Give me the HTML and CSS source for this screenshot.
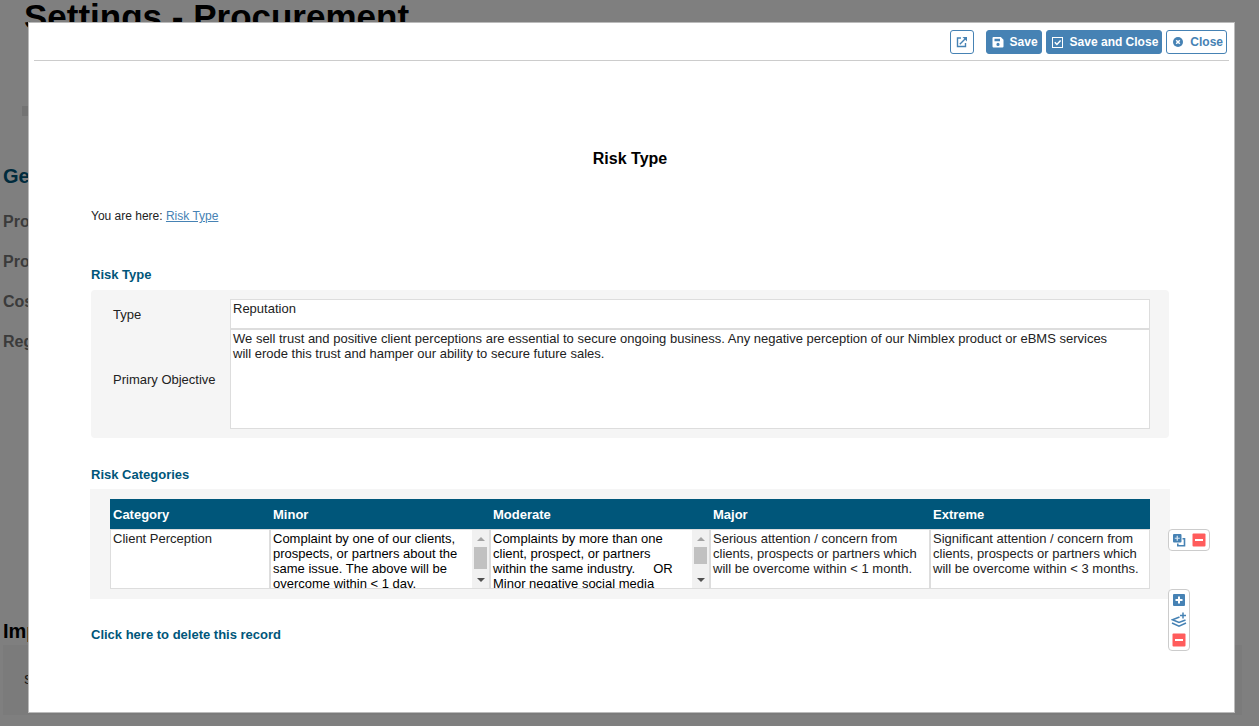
FILE: index.html
```html
<!DOCTYPE html>
<html lang="en">
  <head>
    <meta charset="UTF-8" />
    <meta name="viewport" content="width=device-width, initial-scale=1.0" />
    <title>Risk Type</title>
    <link rel="stylesheet" href="styles.css">
  </head>
  <body>
    <div class="settings">
      <h1>Settings - Procurement</h1>
      <div class="tab-strip"></div>
      <h2 class="settings-group">Ge</h2>
      <ul class="settings-menu">
        <li>Pro</li>
        <li>Pro</li>
        <li>Cos</li>
        <li>Reg</li>
      </ul>
      <h2 class="settings-import">Imp</h2>
      <div class="settings-panel">S</div>
    </div>

    <div class="overlay">
      <div class="dialog" role="dialog" aria-labelledby="dialog-title">
        <div class="toolbar">
          <button type="button" class="btn btn-icon" aria-label="Open in new window">
            <svg width="12" height="12" viewBox="0 0 12 12" fill="none" stroke="currentColor" stroke-width="1.4">
              <path d="M5 2H1.5v8.500H9.500V7M3.800 8.200L9.500 2.500" />
              <path d="M6.500 1H11v4.500z" fill="currentColor" stroke="none" />
            </svg>
          </button>
          <button type="button" class="btn btn-primary">
            <svg width="12" height="12" viewBox="0 0 12 12" fill="currentColor" fill-rule="evenodd">
              <path d="M1.500 1H8.800L11.500 3.700V10.500a1 1 0 0 1-1 1H1.500a1 1 0 0 1-1-1V2a1 1 0 0 1 1-1zM2.500 2.800V5.200H8V2.800zM6 6.800a1.600 1.600 0 1 0 0 3.200a1.600 1.600 0 0 0 0-3.200z" />
            </svg>
            Save
          </button>
          <button type="button" class="btn btn-primary">
            <svg width="12" height="12" viewBox="0 0 12 12" fill="none" stroke="currentColor">
              <rect x="0.500" y="1.500" width="10" height="10" />
              <path d="M2.800 6.300L4.900 8.500L8.600 4.400" stroke-width="1.500" />
            </svg>
            Save and Close
          </button>
          <button type="button" class="btn">
            <svg width="12" height="12" viewBox="0 0 12 12">
              <circle cx="6" cy="6" r="5" fill="currentColor" />
              <path d="M4.200 4.200l3.600 3.600M7.800 4.200l-3.600 3.600" stroke="#fff" stroke-width="1.500" />
            </svg>
            Close
          </button>
        </div>

        <div class="content">
          <h2 class="title" id="dialog-title">Risk Type</h2>
          <p class="breadcrumb">You are here: <a href="#">Risk Type</a></p>

          <h3>Risk Type</h3>
          <div class="panel form">
            <label for="type">Type</label>
            <textarea id="type" class="field">Reputation</textarea>
            <label for="objective">Primary Objective</label>
            <textarea id="objective" class="field field-tall">We sell trust and positive client perceptions are essential to secure ongoing business. Any negative perception of our Nimblex product or eBMS services will erode this trust and hamper our ability to secure future sales.</textarea>
          </div>

          <h3>Risk Categories</h3>
          <div class="panel categories">
            <table>
              <thead>
                <tr>
                  <th class="col-category" id="category">Category</th>
                  <th id="minor">Minor</th>
                  <th id="moderate">Moderate</th>
                  <th id="major">Major</th>
                  <th id="extreme">Extreme</th>
                </tr>
              </thead>
              <tbody>
                <tr>
                  <td><textarea class="field" aria-labelledby="category">Client Perception</textarea></td>
                  <td>
                    <div class="scroll-field">
                      <textarea class="field" aria-labelledby="minor">Complaint by one of our clients, prospects, or partners about the same issue. The above will be overcome within &lt; 1 day.</textarea>
                      <div class="scrollbar">
                        <span class="arrow-up"></span>
                        <span class="thumb thumb-long"></span>
                        <span class="arrow-down"></span>
                      </div>
                    </div>
                  </td>
                  <td>
                    <div class="scroll-field">
                      <textarea class="field" aria-labelledby="moderate">Complaints by more than one client, prospect, or partners within the same industry.     OR Minor negative social media</textarea>
                      <div class="scrollbar">
                        <span class="arrow-up"></span>
                        <span class="thumb"></span>
                        <span class="arrow-down"></span>
                      </div>
                    </div>
                  </td>
                  <td><textarea class="field" aria-labelledby="major">Serious attention / concern from clients, prospects or partners which will be overcome within &lt; 1 month.</textarea></td>
                  <td><textarea class="field" aria-labelledby="extreme">Significant attention / concern from clients, prospects or partners which will be overcome within &lt; 3 months.</textarea></td>
                </tr>
              </tbody>
            </table>

            <div class="actions row-actions">
              <button type="button" aria-label="Duplicate row">
                <svg width="14" height="14" viewBox="0 0 14 14">
                  <path d="M10.500 5.800h2v7H5.800v-2.300" fill="none" stroke="#4682b4" stroke-width="1.600" />
                  <rect x="1" y="1" width="8.500" height="8.500" rx="1" fill="#4682b4" />
                  <path d="M5.250 2.800v5M2.800 5.250h5" stroke="#dbe8f3" stroke-width="1.200" />
                </svg>
              </button>
              <button type="button" aria-label="Delete row">
                <svg width="14" height="14" viewBox="0 0 14 14">
                  <rect x="0.500" y="0.500" width="13" height="13" rx="1" fill="#ff5c5c" />
                  <path d="M3 7h8" stroke="#fff" stroke-width="2" />
                </svg>
              </button>
            </div>

            <div class="actions table-actions">
              <button type="button" aria-label="Add row">
                <svg width="14" height="14" viewBox="0 0 14 14">
                  <rect x="1" y="1" width="12" height="12" rx="1" fill="#4682b4" />
                  <path d="M7 3.500v7M3.500 7h7" stroke="#fff" stroke-width="2" />
                </svg>
              </button>
              <button type="button" aria-label="Add multiple rows">
                <svg width="16" height="16" viewBox="0 0 16 16" fill="none" stroke="#4682b4" stroke-width="1.500">
                  <path d="M8.500 5L1.500 7.800L8 10.500L14.500 8M1 11L8 14.200L15 11" />
                  <path d="M12 0.500v6M9 3.500h6" />
                </svg>
              </button>
              <button type="button" aria-label="Delete rows">
                <svg width="14" height="14" viewBox="0 0 14 14">
                  <rect x="0.500" y="0.500" width="13" height="13" rx="1" fill="#ff5c5c" />
                  <path d="M3 7h8" stroke="#fff" stroke-width="2" />
                </svg>
              </button>
            </div>
          </div>

          <a class="delete" href="#">Click here to delete this record</a>
        </div>
      </div>
    </div>
  </body>
</html>
```
FILE: styles.css
```css
* {
  box-sizing: border-box;
}
body {
  margin: 0;
  height: 100vh;
  overflow: hidden;
  font-family: "Liberation Sans", Arial, sans-serif;
  font-size: 13px;
  color: #222;
}
h1, h2, h3, p, ul {
  margin: 0;
  padding: 0;
}

/* page behind the dialog */
.settings {
  padding: 0 17px 0 3px;
}
.settings h1 {
  padding-left: 21px;
  font-size: 35px;
  line-height: 34px;
  color: #000;
}
.tab-strip {
  height: 10px;
  margin: 72px 19px 50px;
  background: #e6e6e6;
}
.settings-group {
  font-size: 20px;
  line-height: 20px;
  color: #00567a;
}
.settings-menu {
  margin-top: 16px;
  list-style: none;
  font-size: 16px;
  font-weight: bold;
  line-height: 40px;
  color: #777;
}
.settings-import {
  margin: 259px 0 4px;
  font-size: 20px;
  line-height: 20px;
  color: #000;
}
.settings-panel {
  padding: 28px 21px;
  line-height: 14px;
  background: #f6f6f6;
}

.overlay {
  position: fixed;
  inset: 0;
  padding: 22px 24px 13px 28px;
  overflow: auto;
  background: rgba(0, 0, 0, 0.5);
}
.dialog {
  border: 1px solid #bbb;
  background: #fff;
}

.toolbar {
  display: flex;
  justify-content: flex-end;
  gap: 4px;
  margin: 0 5px;
  padding: 7px 2px 6px;
  border-bottom: 1px solid #ccc;
}
.btn {
  display: flex;
  align-items: center;
  gap: 6px;
  height: 24px;
  padding: 0 3px 0 5px;
  border: 1px solid #4682b4;
  border-radius: 3px;
  background: #fff;
  color: #4682b4;
  font-family: inherit;
  font-size: 12px;
  font-weight: bold;
}
.btn-primary {
  background: #4682b4;
  color: #fff;
}
.btn-icon {
  margin-right: 8px;
  padding: 0 5px;
}

.content {
  padding: 89px 65px 69px 62px;
}
.title {
  font-size: 16px;
  line-height: 18px;
  text-align: center;
  color: #000;
}
.breadcrumb {
  margin-top: 41px;
  font-size: 12px;
  line-height: 14px;
}
.breadcrumb a {
  color: #4682b4;
}
h3 {
  margin-top: 44px;
  font-size: 13px;
  line-height: 16px;
  color: #00567a;
}
.panel {
  margin-top: 7px;
  background: #f5f5f5;
}
.panel + h3 {
  margin-top: 29px;
}
.form {
  display: grid;
  grid-template-columns: 117px 1fr;
  align-items: center;
  padding: 9px 19px 9px 22px;
  border-radius: 4px;
}
.field {
  display: block;
  width: 100%;
  height: 30px;
  padding: 1px 2px;
  border: 1px solid #ddd;
  border-radius: 0;
  outline: none;
  resize: none;
  overflow: hidden;
  background: #fff;
  color: #222;
  font-family: inherit;
  font-size: 13px;
  line-height: 15px;
}
.field-tall {
  height: 100px;
  padding-right: 24px;
}

.categories {
  position: relative;
  margin: 6px -1px 0;
  padding: 10px 20px;
}
table {
  width: 100%;
  table-layout: fixed;
  border-collapse: collapse;
}
th {
  height: 30px;
  padding: 0 3px;
  text-align: left;
  background: #00567a;
  color: #fff;
}
.col-category {
  width: 160px;
}
td {
  padding: 0;
}
td .field {
  height: 60px;
}

.scroll-field {
  display: flex;
  border: 1px solid #ddd;
}
.scroll-field .field {
  height: 58px;
  padding-right: 10px;
  border: 0;
  color: #000;
}
.scrollbar {
  flex: none;
  display: flex;
  flex-direction: column;
  align-items: center;
  width: 17px;
  background: #f1f1f1;
}
.arrow-up,
.arrow-down {
  height: 17px;
  padding: 7px 0 6px;
}
.arrow-up::before,
.arrow-down::before {
  content: "";
  display: block;
  border: solid transparent;
  border-width: 0 4px;
}
.arrow-up::before {
  border-bottom: 4px solid #a3a3a3;
}
.arrow-down::before {
  border-top: 4px solid #505050;
}
.arrow-down {
  margin-top: auto;
}
.thumb {
  width: 13px;
  height: 17px;
  background: #c1c1c1;
}
.thumb-long {
  height: 22px;
}

/* row and table buttons hanging off the right edge */
.actions {
  position: absolute;
  left: calc(100% - 2px);
  display: flex;
  border: 1px solid #ccc;
  border-radius: 4px;
  background: #fff;
}
.actions button {
  display: flex;
  align-items: center;
  justify-content: center;
  width: 20px;
  height: 20px;
  padding: 0;
  border: 0;
  background: none;
}
.row-actions {
  top: 40px;
}
.table-actions {
  top: 100px;
  flex-direction: column;
}

.delete {
  display: inline-block;
  margin-top: 28px;
  line-height: 16px;
  font-weight: bold;
  text-decoration: none;
  color: #00567a;
}
```
